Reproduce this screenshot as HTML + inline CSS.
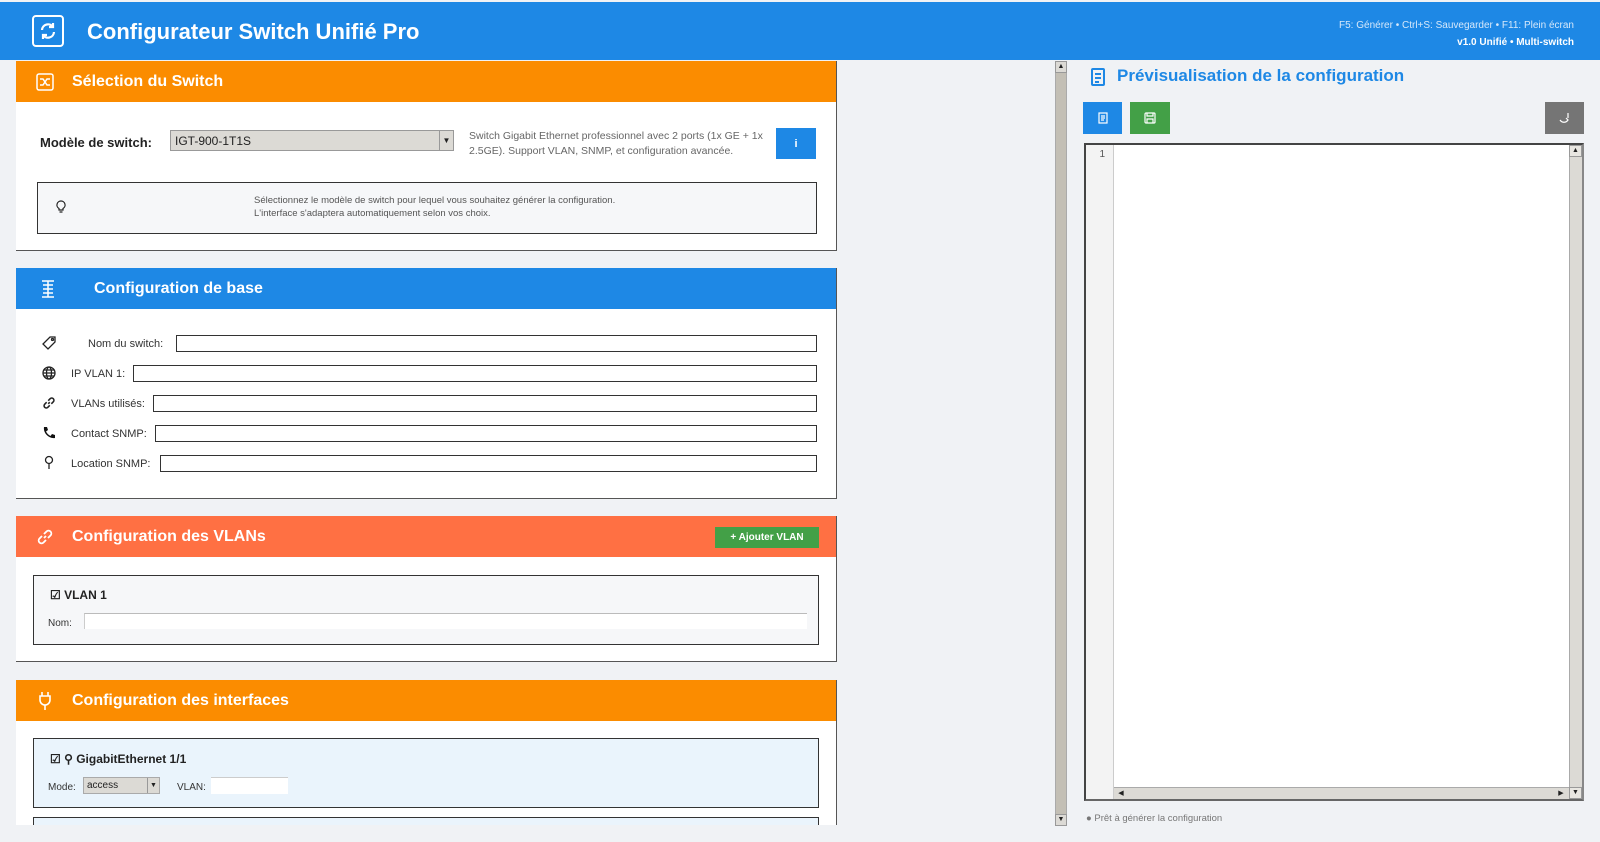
<!DOCTYPE html>
<html><head><meta charset="utf-8"><style>
*{box-sizing:border-box;margin:0;padding:0}
body{width:1600px;height:842px;overflow:hidden;background:#f0f2f5;font-family:"Liberation Sans",sans-serif;position:relative;color:#222}
.abs{position:absolute}
.hdr{left:0;top:2px;width:1600px;height:58px;background:#1e88e5}
.card{position:absolute;left:16px;width:821px;background:#fff;border-right:1px solid #555;border-bottom:1px solid #555}
.ch{height:41px;color:#fff;font-weight:bold;font-size:16px;display:flex;align-items:center;padding-left:20px}
.ch svg{margin-right:18px}
.lbl{font-size:11px;color:#333}
.inp{position:absolute;height:17px;border:1px solid #333;background:#fff}
.btn{position:absolute;display:flex;align-items:center;justify-content:center}
</style></head><body>
<div class="abs hdr"></div>
<div class="abs" style="left:32px;top:15px;width:32px;height:32px;border:2px solid #fff;border-radius:4px;display:flex;align-items:center;justify-content:center">
<svg width="20" height="20" viewBox="0 0 20 20" fill="none" stroke="#fff" stroke-width="2.2"><path d="M4 9a6 6 0 0 1 11-3M16 11a6 6 0 0 1-11 3"/><path d="M15 2v4h-4M5 18v-4h4"/></svg></div>
<div class="abs" style="left:87px;top:19px;color:#fff;font-size:22px;font-weight:bold">Configurateur Switch Unifié Pro</div>
<div class="abs" style="right:26px;top:17px;color:#d6e8fa;font-size:10px;text-align:right;line-height:17px">F5: Générer • Ctrl+S: Sauvegarder • F11: Plein écran<br><b style="color:#fff">v1.0 Unifié • Multi-switch</b></div>

<!-- Card 1 -->
<div class="card" style="top:61px;height:190px">
<div class="ch" style="background:#fb8c00"><svg width="18" height="18" viewBox="0 0 18 18" fill="none" stroke="#fff" stroke-width="1.5"><rect x="1" y="1" width="16" height="16" rx="2"/><path d="M4 6h3l4 6h3M4 12h3l4-6h3"/></svg>Sélection du Switch</div>
<div class="abs" style="left:24px;top:74px;font-size:13px;font-weight:bold">Modèle de switch:</div>
<div class="abs" style="left:154px;top:69px;width:284px;height:21px;background:#dcdad5;border:1px solid #999;font-size:12px;padding:3px 4px">IGT-900-1T1S<span style="position:absolute;right:0;top:0;width:14px;height:19px;border-left:1px solid #999;font-size:8px;text-align:center;line-height:19px">▼</span></div>
<div class="abs" style="left:453px;top:68px;width:320px;font-size:10.5px;color:#666;line-height:15px">Switch Gigabit Ethernet professionnel avec 2 ports (1x GE + 1x 2.5GE). Support VLAN, SNMP, et configuration avancée.</div>
<div class="btn" style="left:760px;top:67px;width:40px;height:31px;background:#1e88e5;color:#fff;font-size:11px;font-weight:bold">i</div>
<div class="abs" style="left:21px;top:121px;width:780px;height:52px;border:1px solid #333;background:#f6f7f9"></div>
<svg class="abs" style="left:40px;top:139px" width="10" height="14" viewBox="0 0 10 14" fill="none" stroke="#222" stroke-width="1.2"><path d="M5 1a4 4 0 0 0-2 7.5V10h4V8.5A4 4 0 0 0 5 1zM3.5 12h3"/></svg>
<div class="abs" style="left:238px;top:133px;font-size:9.5px;color:#555;line-height:13px">Sélectionnez le modèle de switch pour lequel vous souhaitez générer la configuration.<br>L'interface s'adaptera automatiquement selon vos choix.</div>
</div>

<!-- Card 2 -->
<div class="card" style="top:268px;height:231px">
<div class="ch" style="background:#1e88e5;padding-left:24px"><svg width="16" height="18" viewBox="0 0 16 18" fill="none" stroke="#fff" stroke-width="1.5"><path d="M2 1h12M8 1v16M2 17h12M3 5h10M3 9h10M3 13h10"/></svg><span style="margin-left:20px">Configuration de base</span></div>
<svg class="abs" style="left:26px;top:68px" width="14" height="14" viewBox="0 0 14 14" fill="none" stroke="#222" stroke-width="1.3"><path d="M8 1h5v5l-7 7-5-5z"/><circle cx="10.5" cy="3.5" r="1"/></svg>
<div class="abs lbl" style="left:72px;top:70px">Nom du switch:</div><div class="inp" style="left:160px;top:67px;width:641px"></div>
<svg class="abs" style="left:26px;top:98px" width="14" height="14" viewBox="0 0 14 14" fill="none" stroke="#222" stroke-width="1.3"><circle cx="7" cy="7" r="6"/><ellipse cx="7" cy="7" rx="2.5" ry="6"/><path d="M1 7h12M2 4h10M2 10h10"/></svg>
<div class="abs lbl" style="left:55px;top:100px">IP VLAN 1:</div><div class="inp" style="left:117px;top:97px;width:684px"></div>
<svg class="abs" style="left:26px;top:128px" width="14" height="14" viewBox="0 0 18 18" fill="none" stroke="#222" stroke-width="2"><path d="M8 10l2-2M6 8L3.5 10.5a2.5 2.5 0 0 0 4 4L10 12M12 10l2.5-2.5a2.5 2.5 0 0 0-4-4L8 6"/></svg>
<div class="abs lbl" style="left:55px;top:130px">VLANs utilisés:</div><div class="inp" style="left:137px;top:127px;width:664px"></div>
<svg class="abs" style="left:26px;top:158px" width="14" height="14" viewBox="0 0 14 14"><path d="M2 1l3 0 1 3-2 1.5c1 2 2.5 3.5 4.5 4.5L10 8l3 1v3c-6 1-12-5-11-11z" fill="#111"/></svg>
<div class="abs lbl" style="left:55px;top:160px">Contact SNMP:</div><div class="inp" style="left:139px;top:157px;width:662px"></div>
<svg class="abs" style="left:28px;top:187px" width="10" height="15" viewBox="0 0 10 15" fill="none" stroke="#222" stroke-width="1.3"><circle cx="5" cy="5" r="3.5"/><path d="M5 8.5V14"/></svg>
<div class="abs lbl" style="left:55px;top:190px">Location SNMP:</div><div class="inp" style="left:144px;top:187px;width:657px"></div>
</div>

<!-- Card 3 -->
<div class="card" style="top:516px;height:146px">
<div class="ch" style="background:#ff7043"><svg width="18" height="18" viewBox="0 0 18 18" fill="none" stroke="#fff" stroke-width="1.8"><path d="M8 10l2-2M6 8L3.5 10.5a2.5 2.5 0 0 0 4 4L10 12M12 10l2.5-2.5a2.5 2.5 0 0 0-4-4L8 6"/></svg>Configuration des VLANs</div>
<div class="btn" style="left:699px;top:11px;width:104px;height:21px;background:#43a047;color:#fff;font-size:10px;font-weight:bold">+ Ajouter VLAN</div>
<div class="abs" style="left:17px;top:59px;width:786px;height:70px;border:1px solid #333;background:#f6f7f9"></div>
<div class="abs" style="left:34px;top:72px;font-size:12px;font-weight:bold">☑ VLAN 1</div>
<div class="abs lbl" style="left:32px;top:102px;font-size:10px">Nom:</div>
<div class="abs" style="left:68px;top:97px;width:723px;height:16px;background:#fff;border-top:1px solid #bbb;border-left:1px solid #ccc"></div>
</div>

<!-- Card 4 -->
<div class="card" style="top:680px;height:145px;border-bottom:none;overflow:hidden">
<div class="ch" style="background:#fb8c00"><svg width="18" height="20" viewBox="0 0 18 20" fill="none" stroke="#fff" stroke-width="1.6"><path d="M6 1v4M12 1v4M4 5h10v4a5 5 0 0 1-10 0zM9 14v5"/></svg>Configuration des interfaces</div>
<div class="abs" style="left:17px;top:58px;width:786px;height:70px;border:1px solid #333;background:#eaf4fc"></div>
<div class="abs" style="left:34px;top:72px;font-size:12px;font-weight:bold">☑ ⚲ GigabitEthernet 1/1</div>
<div class="abs lbl" style="left:32px;top:102px;font-size:10px">Mode:</div>
<div class="abs" style="left:67px;top:97px;width:77px;height:17px;background:#dcdad5;border:1px solid #aaa;font-size:10px;padding:2px 3px">access<span style="position:absolute;right:0;top:0;width:12px;height:15px;border-left:1px solid #999;font-size:7px;text-align:center;line-height:15px">▼</span></div>
<div class="abs lbl" style="left:161px;top:102px;font-size:10px">VLAN:</div>
<div class="abs" style="left:195px;top:97px;width:77px;height:17px;background:#fff;border-top:1px solid #ccc"></div>
<div class="abs" style="left:17px;top:137px;width:786px;height:20px;border:1px solid #333;background:#eaf4fc"></div>
</div>

<!-- vertical scrollbar -->
<div class="abs" style="left:1055px;top:61px;width:12px;height:765px;background:#c3bfb5;border:1px solid #aaa"></div>
<div class="abs" style="left:1055px;top:61px;width:12px;height:12px;background:#dcdad5;border:1px solid #999;font-size:7px;text-align:center;line-height:10px">▲</div>
<div class="abs" style="left:1055px;top:814px;width:12px;height:12px;background:#dcdad5;border:1px solid #999;font-size:7px;text-align:center;line-height:10px">▼</div>

<!-- right panel -->
<svg class="abs" style="left:1090px;top:67px" width="16" height="19" viewBox="0 0 16 19" fill="none" stroke="#1e88e5" stroke-width="2"><rect x="2" y="2" width="12" height="16" rx="1"/><path d="M5 7h6M5 11h6M5 15h4"/></svg>
<div class="abs" style="left:1117px;top:66px;font-size:17px;font-weight:bold;color:#1e88e5">Prévisualisation de la configuration</div>
<div class="btn" style="left:1083px;top:102px;width:39px;height:32px;background:#1e88e5"><svg width="10" height="12" viewBox="0 0 10 12" fill="none" stroke="#fff" stroke-width="1.2"><rect x="1" y="1" width="8" height="10"/><path d="M3 4h4M3 6h4M3 8h3"/></svg></div>
<div class="btn" style="left:1130px;top:102px;width:40px;height:32px;background:#43a047"><svg width="12" height="12" viewBox="0 0 12 12" fill="none" stroke="#fff" stroke-width="1.2"><rect x="1" y="1" width="10" height="10" rx="1"/><path d="M3 1v3h6V1M3 11V7h6v4"/></svg></div>
<div class="btn" style="left:1545px;top:102px;width:39px;height:32px;background:#757575"><svg width="12" height="12" viewBox="0 0 12 12" fill="none" stroke="#fff" stroke-width="1.2"><path d="M1 8c2 3 6 3 8 0l-2-2M9 1v5"/></svg></div>

<div class="abs" style="left:1084px;top:143px;width:500px;height:658px;background:#fff;border:2px solid #444;border-right-color:#888;border-bottom-color:#666"></div>
<div class="abs" style="left:1086px;top:145px;width:28px;height:654px;background:#f3f3f3;border-right:1px solid #ccc;font-size:10px;color:#555;text-align:right;padding:4px 8px 0 0">1</div>
<div class="abs" style="left:1569px;top:145px;width:13px;height:654px;background:#dcdad5;border-left:1px solid #aaa"></div>
<div class="abs" style="left:1569px;top:145px;width:13px;height:12px;font-size:7px;text-align:center;background:#e8e6e1;border:1px solid #999;line-height:10px">▲</div>
<div class="abs" style="left:1569px;top:787px;width:13px;height:12px;font-size:7px;text-align:center;background:#e8e6e1;border:1px solid #999;line-height:10px">▼</div>
<div class="abs" style="left:1114px;top:787px;width:455px;height:12px;background:#dcdad5;border-top:1px solid #aaa"></div>
<div class="abs" style="left:1115px;top:788px;width:12px;height:11px;font-size:7px;text-align:center;line-height:11px">◀</div>
<div class="abs" style="left:1555px;top:788px;width:12px;height:11px;font-size:7px;text-align:center;line-height:11px">▶</div>
<div class="abs" style="left:1086px;top:813px;font-size:9.5px;color:#777">● Prêt à générer la configuration</div>
</body></html>
